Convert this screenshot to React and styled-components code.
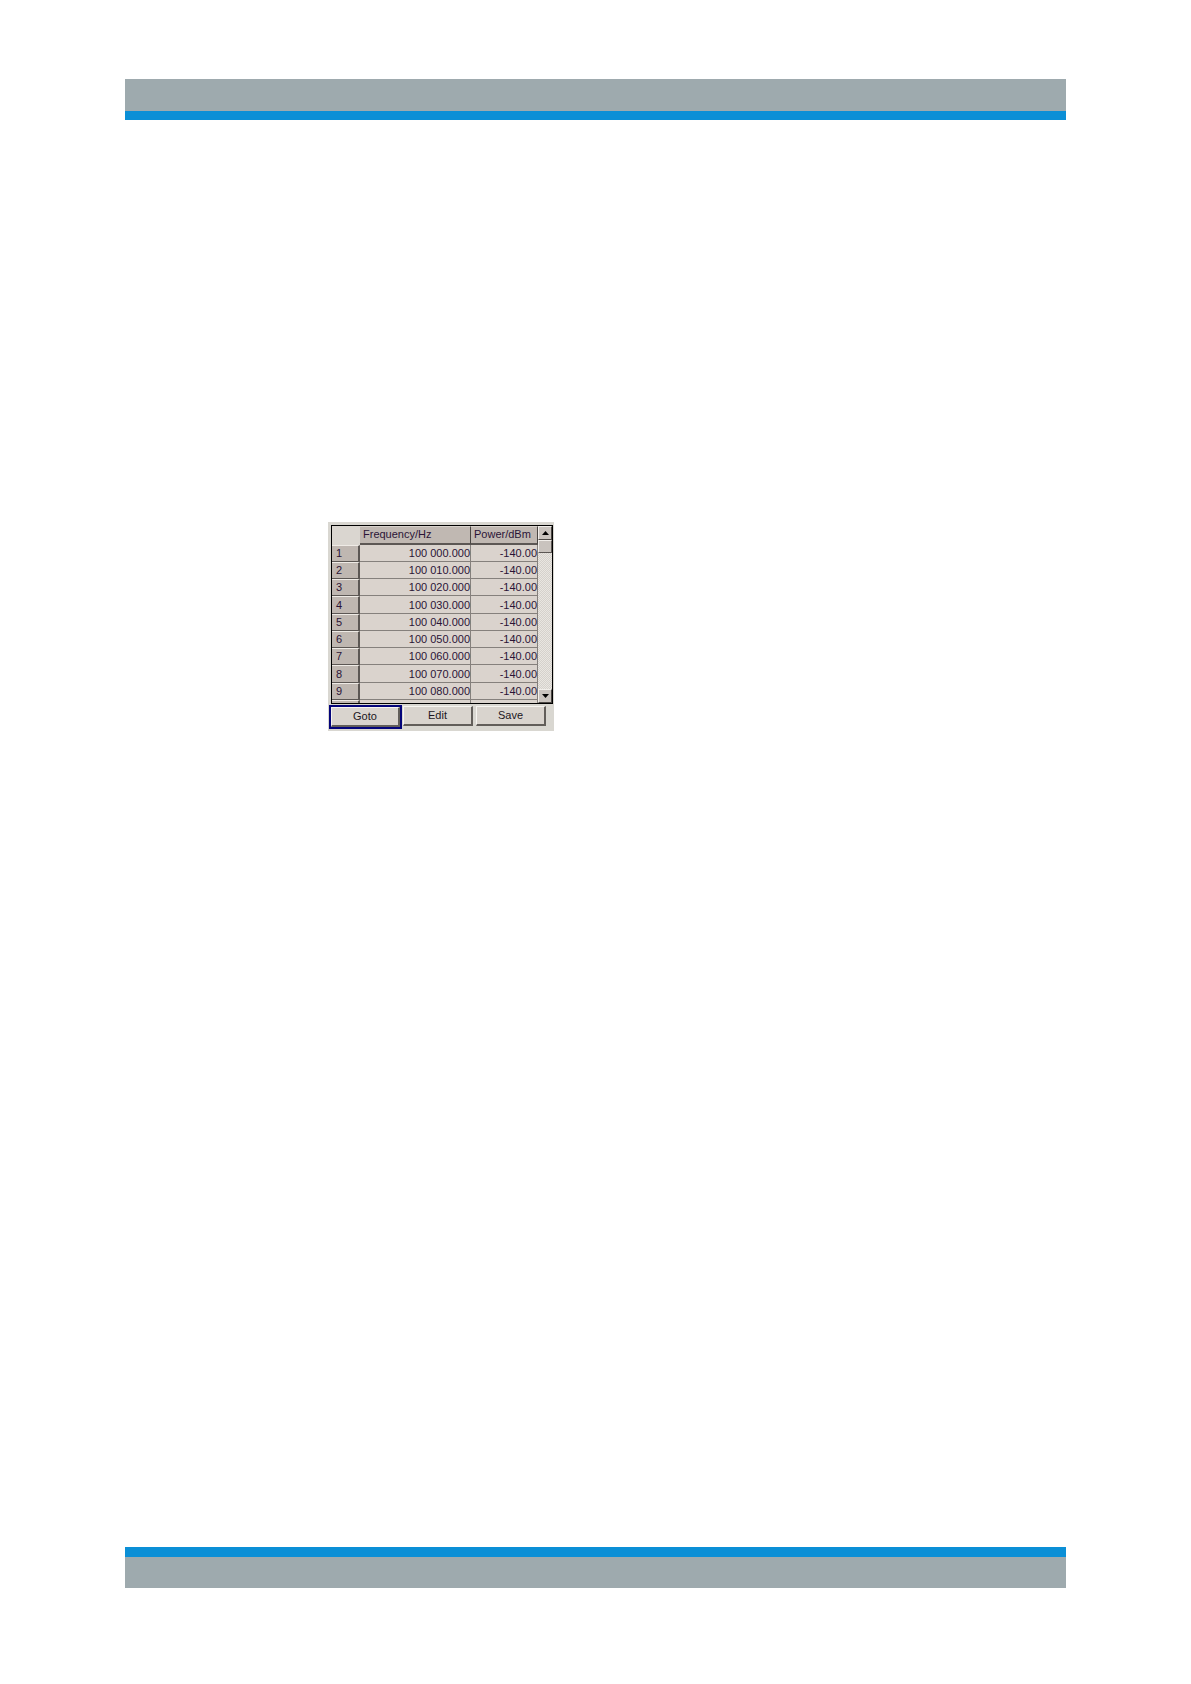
import { useState } from "react";
import styled, { createGlobalStyle } from "styled-components";

const rows = [
  { frequency: "100 000.000", power: "-140.00" },
  { frequency: "100 010.000", power: "-140.00" },
  { frequency: "100 020.000", power: "-140.00" },
  { frequency: "100 030.000", power: "-140.00" },
  { frequency: "100 040.000", power: "-140.00" },
  { frequency: "100 050.000", power: "-140.00" },
  { frequency: "100 060.000", power: "-140.00" },
  { frequency: "100 070.000", power: "-140.00" },
  { frequency: "100 080.000", power: "-140.00" },
];

const actions = ["Goto", "Edit", "Save"];

const ListTable = () => (
  <Table>
    <colgroup>
      <col width="28" />
      <col />
      <col width="67" />
    </colgroup>
    <thead>
      <tr>
        <Corner />
        <ColumnHead scope="col">Frequency/Hz</ColumnHead>
        <ColumnHead scope="col">Power/dBm</ColumnHead>
      </tr>
    </thead>
    <tbody>
      {rows.map((row, index) => (
        <Row key={row.frequency}>
          <RowHead scope="row">{index + 1}</RowHead>
          <Cell>{row.frequency}</Cell>
          <Cell>{row.power}</Cell>
        </Row>
      ))}
      {/* top edge of the next row, cut off by the frame */}
      <Row>
        <RowHead as="td" />
        <Cell />
        <Cell />
      </Row>
    </tbody>
  </Table>
);

const ScrollBar = () => (
  <Track>
    <ScrollButton type="button" aria-label="Scroll up">
      <svg width="7" height="4" viewBox="0 0 7 4">
        <path d="M0 4L3.5 0L7 4Z" />
      </svg>
    </ScrollButton>
    <Thumb />
    <ScrollButton type="button" aria-label="Scroll down">
      <svg width="7" height="4" viewBox="0 0 7 4">
        <path d="M0 0L3.5 4L7 0Z" />
      </svg>
    </ScrollButton>
  </Track>
);

const App = () => {
  const [active, setActive] = useState("Goto");

  return (
    <Page>
      <GlobalStyle />
      <HeaderBar />
      <Content>
        <Panel>
          <Frame>
            <ListTable />
            <ScrollBar />
          </Frame>
          <Actions>
            {actions.map((name) => (
              <ActionWrap key={name} $active={active === name}>
                <ActionButton type="button" onClick={() => setActive(name)}>
                  {name}
                </ActionButton>
              </ActionWrap>
            ))}
          </Actions>
        </Panel>
      </Content>
      <FooterBar />
    </Page>
  );
};

const GlobalStyle = createGlobalStyle`
  * {
    box-sizing: border-box;
  }
  body {
    margin: 0;
    background: #fff;
    font-family: "Liberation Sans", Arial, sans-serif;
  }
`;

const Page = styled.div`
  display: flex;
  flex-direction: column;
  min-height: 100vh;
  padding: 79px 125px 96px;
`;

const HeaderBar = styled.header`
  height: 41px;
  background: #9eaaae;
  border-bottom: 9px solid #0b8fd6;
`;

const FooterBar = styled.footer`
  height: 41px;
  background: #9eaaae;
  border-top: 10px solid #0b8fd6;
`;

const Content = styled.main`
  flex: 1;
  padding: 402px 0 0 203px;
`;

const Panel = styled.section`
  width: 226px;
  padding: 3px 1px 2px;
  background: #d9d7d1;
`;

const Frame = styled.div`
  display: flex;
  height: 179px;
  margin-left: 2px;
  overflow: hidden;
  border: 1px solid #000;
  background: #dad3cd;
`;

const Table = styled.table`
  flex: 1;
  align-self: flex-start;
  table-layout: fixed;
  border-collapse: separate;
  border-spacing: 0;
  color: #2b1436;
  font-size: 11px;
  line-height: 14px;
`;

const Corner = styled.td`
  padding: 0;
  background: #dad6d0;
`;

const ColumnHead = styled.th`
  height: 19px;
  padding: 0 0 2px 3px;
  border-top: 1px solid #d8d2cc;
  border-right: 1px solid #4a4643;
  border-bottom: 2px solid #5c5754;
  background: #c0b8b2;
  font-weight: normal;
  text-align: left;
`;

const Row = styled.tr`
  height: 17px;

  &:nth-child(4n) {
    height: 18px;
  }
`;

const RowHead = styled.th`
  padding: 0 0 1px 4px;
  border-top: 1px solid #efebe6;
  border-right: 2px solid #5c5754;
  border-bottom: 1px solid #5c5754;
  background: #bfb7b1;
  font-weight: normal;
  text-align: left;
`;

const Cell = styled.td`
  padding: 0;
  border-right: 1px solid #85807c;
  border-bottom: 1px solid #85807c;
  text-align: right;
`;

const Track = styled.div`
  display: flex;
  flex-direction: column;
  width: 14px;
  background: repeating-conic-gradient(#d5d1cc 0 25%, #e9e6e1 0 50%) 0 0 / 2px 2px;
`;

const ScrollButton = styled.button`
  display: flex;
  align-items: center;
  justify-content: center;
  height: 14px;
  padding: 0;
  border: 1px solid;
  border-color: #f1eeea #4a4643 #4a4643 #f1eeea;
  background: #c9c3be;

  &:last-child {
    margin-top: auto;
  }
`;

const Thumb = styled.div`
  height: 13px;
  border: 1px solid;
  border-color: #f1eeea #5c5754 #5c5754 #f1eeea;
  background: #c9c3be;
`;

const Actions = styled.div`
  display: flex;
  margin-top: 1px;
`;

const ActionWrap = styled.div`
  width: 73px;
  height: 24px;
  padding: ${(props) => (props.$active ? "0" : "1px")};
  border: ${(props) => (props.$active ? "2px solid #04047a" : "none")};
`;

const ActionButton = styled.button`
  display: block;
  width: 70px;
  height: 20px;
  max-width: 100%;
  padding: 0 0 1px;
  border-style: solid;
  border-width: 1px 2px 2px 1px;
  border-color: #f6f4f0 #625e5a #625e5a #f6f4f0;
  background: #d9d4ce;
  color: #1c1622;
  font-family: inherit;
  font-size: 11px;
  line-height: 14px;
`;

export default App;
